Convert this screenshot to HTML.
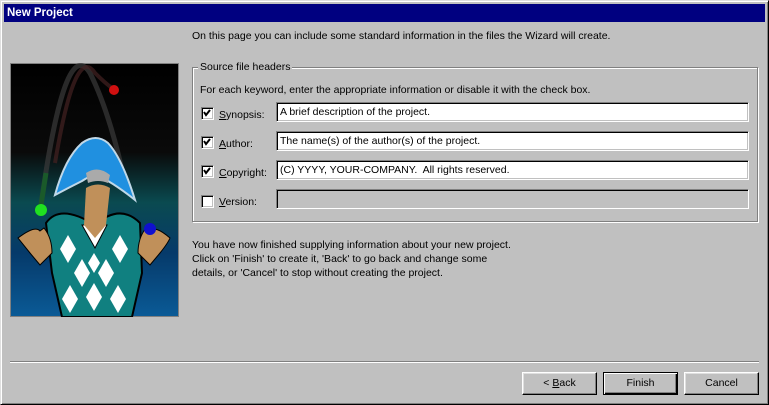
<!DOCTYPE html>
<html><head><style>
*{margin:0;padding:0;box-sizing:border-box}
body{width:769px;height:405px;background:#c0c0c0;font-family:"Liberation Sans",Arial,sans-serif;font-size:10.5px;color:#000;position:relative;overflow:hidden}
.a{position:absolute}
.win{left:0;top:0;width:769px;height:405px;border-top:1px solid #dfdfdf;border-left:1px solid #dfdfdf;border-right:1px solid #000;border-bottom:1px solid #000;box-shadow:inset 1px 1px #fff,inset -1px -1px #808080}
.title{left:4px;top:4px;width:761px;height:18px;background:#000080;color:#fff;font-weight:bold;font-size:11.5px;line-height:18px;padding-left:3px}
.edit{height:20px;background:#fff;border-top:1px solid #808080;border-left:1px solid #808080;border-right:1px solid #fff;border-bottom:1px solid #fff;box-shadow:inset 1px 1px #000,inset -1px -1px #c0c0c0;padding:3px 0 0 3px;white-space:nowrap}
.cb{width:13px;height:13px;background:#fff;border-top:1px solid #808080;border-left:1px solid #808080;border-right:1px solid #fff;border-bottom:1px solid #fff;box-shadow:inset 1px 1px #000,inset -1px -1px #c0c0c0}
.lbl{white-space:nowrap}
.btn{width:75px;height:23px;background:#c0c0c0;border-top:1px solid #fff;border-left:1px solid #fff;border-right:1px solid #000;border-bottom:1px solid #000;box-shadow:inset -1px -1px #808080,inset 1px 1px #dfdfdf;text-align:center;line-height:21px}
u{text-decoration:underline}
</style></head><body>
<div class="a win"></div>
<div class="a title">New Project</div>
<div class="a lbl" style="left:192px;top:30px">On this page you can include some standard information in the files the Wizard will create.</div>

<svg class="a" style="left:10px;top:63px" width="169" height="254" viewBox="0 0 169 254">
<defs><linearGradient id="g" x1="0" y1="0" x2="0" y2="1">
<stop offset="0" stop-color="#000"/><stop offset="0.35" stop-color="#0a0a0a"/><stop offset="0.55" stop-color="#0a4a50"/><stop offset="0.75" stop-color="#063a6a"/><stop offset="1" stop-color="#0a5a96"/></linearGradient></defs>
<rect x="0" y="0" width="169" height="254" fill="#808080"/>
<rect x="1" y="1" width="167" height="252" fill="url(#g)"/>
<path d="M31 142 Q55 -30 80 10 Q100 50 115 120" stroke="#3a3a3a" stroke-width="5" fill="none" opacity=".7"/>
<path d="M45 100 Q65 -20 85 10 Q95 20 102 25" stroke="#442222" stroke-width="4" fill="none" opacity=".7"/>
<path d="M31 142 L36 110" stroke="#1a5a2a" stroke-width="5"/>
<circle cx="104" cy="27" r="5" fill="#d01010"/>
<circle cx="31" cy="147" r="6" fill="#20e020"/>
<path d="M36 160 Q50 140 85 162 Q110 140 130 160 L132 210 L122 254 L52 254 L42 210Z" fill="#108080" stroke="#000" stroke-width="2"/>
<path d="M72 162 L85 185 L97 162Z" fill="#fff" stroke="#000"/>
<path d="M76 125 Q88 118 100 125 L96 162 L85 175 L74 162Z" fill="#c0905a"/>
<path d="M45 132 Q55 95 72 80 Q86 70 98 80 Q112 95 125 137 Q110 125 98 118 Q86 108 72 118 Q58 125 45 132Z" fill="#2090e0" stroke="#c0d8e8" stroke-width="2"/>
<path d="M76 110 Q88 102 100 112 L98 120 Q88 116 78 120Z" fill="#aaa"/>
<g fill="#fff"><path d="M58 172 l8 14 -8 14 -8 -14z"/><path d="M110 172 l8 14 -8 14 -8 -14z"/><path d="M72 196 l8 14 -8 14 -8 -14z"/><path d="M96 196 l8 14 -8 14 -8 -14z"/><path d="M60 222 l8 14 -8 14 -8 -14z"/><path d="M84 220 l8 14 -8 14 -8 -14z"/><path d="M108 222 l8 14 -8 14 -8 -14z"/><path d="M84 190 l6 10 -6 10 -6 -10z"/></g>
<path d="M8 175 Q25 162 30 168 L34 165 Q42 175 42 190 L30 202 L20 190 Q12 180 8 175Z" fill="#c0905a" stroke="#000"/>
<path d="M160 175 Q145 162 140 168 L136 165 Q128 175 128 190 L140 202 L150 190 Q158 180 160 175Z" fill="#c0905a" stroke="#000"/>
<circle cx="140" cy="166" r="6" fill="#1010d0"/>
</svg>

<!-- group box -->
<div class="a" style="left:192px;top:67px;width:566px;height:155px;border:1px solid #808080;box-shadow:1px 1px #fff,inset 1px 1px #fff"></div>
<div class="a lbl" style="left:198px;top:61px;background:#c0c0c0;padding:0 2px">Source file headers</div>
<div class="a lbl" style="left:200px;top:84px">For each keyword, enter the appropriate information or disable it with the check box.</div>

<div class="a cb" style="left:201px;top:107px"></div>
<svg class="a" style="left:203px;top:109px" width="9" height="9"><path d="M1 3 L3 6 L7 1" stroke="#000" stroke-width="2" fill="none"/></svg>
<div class="a lbl" style="left:219px;top:109px"><u>S</u>ynopsis:</div>
<div class="a edit" style="left:276px;top:102px;width:473px">A brief description of the project.</div>

<div class="a cb" style="left:201px;top:136px"></div>
<svg class="a" style="left:203px;top:138px" width="9" height="9"><path d="M1 3 L3 6 L7 1" stroke="#000" stroke-width="2" fill="none"/></svg>
<div class="a lbl" style="left:219px;top:138px"><u>A</u>uthor:</div>
<div class="a edit" style="left:276px;top:131px;width:473px">The name(s) of the author(s) of the project.</div>

<div class="a cb" style="left:201px;top:165px"></div>
<svg class="a" style="left:203px;top:167px" width="9" height="9"><path d="M1 3 L3 6 L7 1" stroke="#000" stroke-width="2" fill="none"/></svg>
<div class="a lbl" style="left:219px;top:167px"><u>C</u>opyright:</div>
<div class="a edit" style="left:276px;top:160px;width:473px">(C) YYYY, YOUR-COMPANY.&nbsp; All rights reserved.</div>

<div class="a cb" style="left:201px;top:195px"></div>
<div class="a lbl" style="left:219px;top:196px"><u>V</u>ersion:</div>
<div class="a edit" style="left:276px;top:189px;width:473px;background:#c0c0c0"></div>

<div class="a" style="left:192px;top:238px;line-height:14px">You have now finished supplying information about your new project.<br>Click on 'Finish' to create it, 'Back' to go back and change some<br>details, or 'Cancel' to stop without creating the project.</div>

<div class="a" style="left:10px;top:361px;width:749px;height:2px;border-top:1px solid #808080;border-bottom:1px solid #fff"></div>

<div class="a btn" style="left:522px;top:372px">&lt; <u>B</u>ack</div>
<div class="a btn" style="left:603px;top:372px;border:1px solid #000;box-shadow:inset 1px 1px #fff,inset -1px -1px #000,inset -2px -2px #808080">Finish</div>
<div class="a btn" style="left:684px;top:372px">Cancel</div>
</body></html>
